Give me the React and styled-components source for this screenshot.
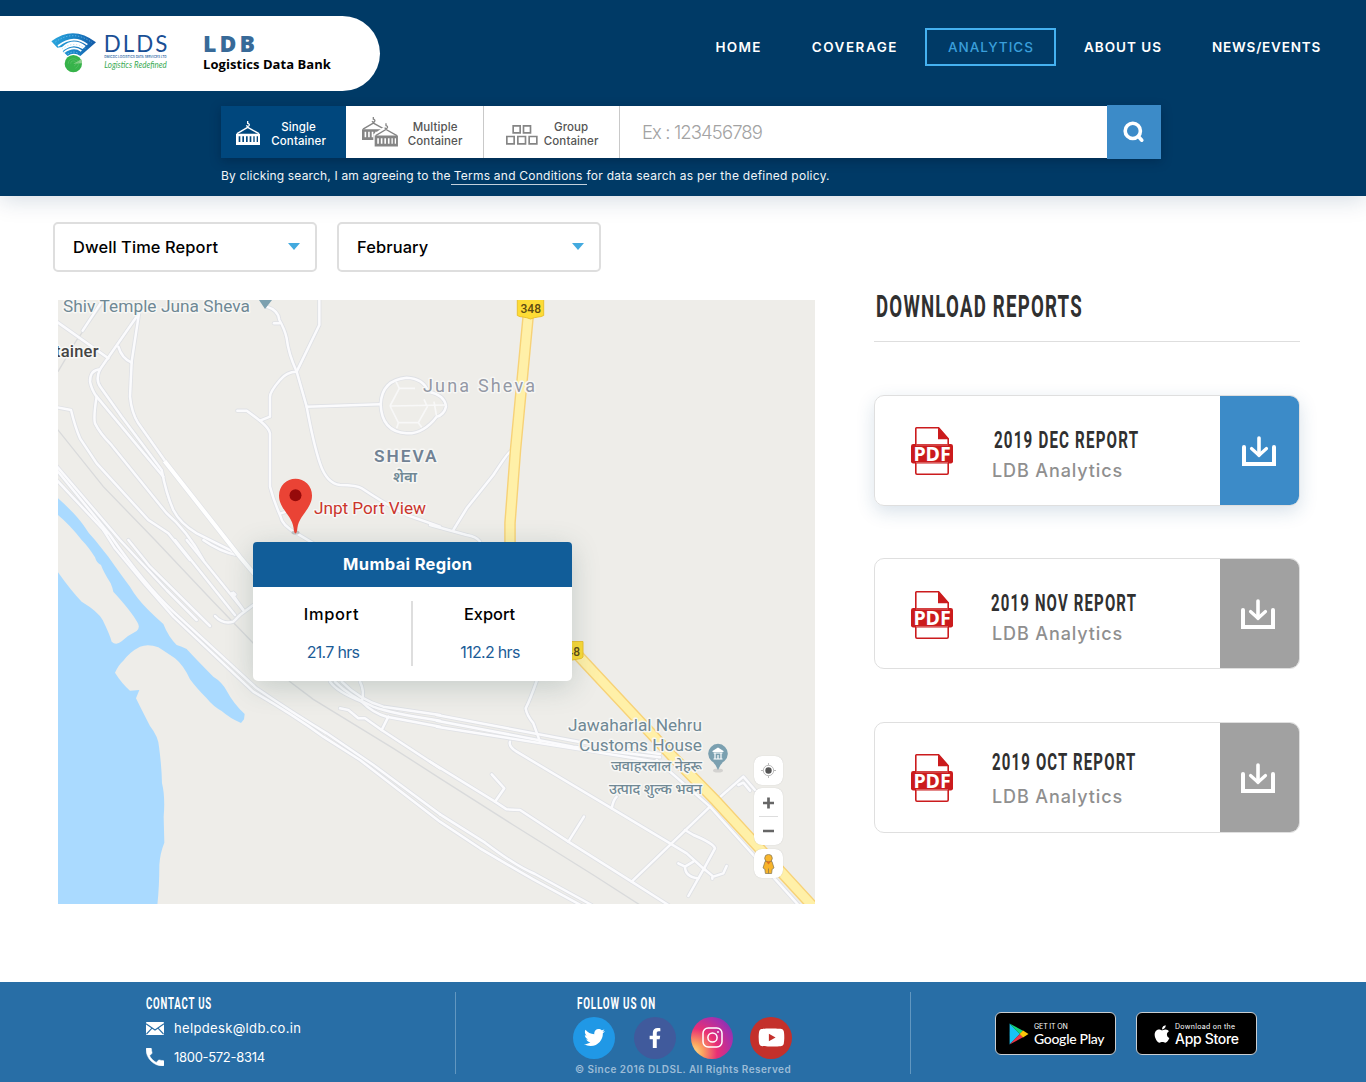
import React from 'react';
import styled, { createGlobalStyle, css } from 'styled-components';
import { FaTwitter, FaFacebookF, FaYoutube, FaApple } from 'react-icons/fa';

const GlobalStyle = createGlobalStyle`
  * { box-sizing: border-box; }
  html, body { margin: 0; padding: 0; background: #fff; }
  body { font-family: Inter, "Noto Sans", sans-serif; color: #0b0b0b; }
  svg { display: block; flex: none; }
`;

const condensed = css`
  font-family: Roboto, sans-serif;
  font-weight: 700;
  white-space: nowrap;
  transform-origin: left center;
`;

const Page = styled.div`
  width: 1366px;
  height: 1082px;
  display: flex;
  flex-direction: column;
  overflow: hidden;
`;

/* ---------- header ---------- */

const Header = styled.header`
  flex: none;
  height: 196px;
  background: #003a66;
  box-shadow: 0 4px 22px rgba(0, 50, 90, 0.17);
`;

const TopBar = styled.div`
  display: flex;
  justify-content: space-between;
  height: 106px;
  padding: 16px 23px 0 0;
`;

const LogoPill = styled.div`
  display: flex;
  width: 380px;
  height: 75px;
  padding: 12px 0 0 50px;
  background: #fff;
  border-radius: 0 38px 38px 0;
`;

const Brand = styled.div`
  margin-left: 31px;
  padding-top: 4px;
  font-family: "Open Sans", sans-serif;
  font-weight: 700;
  white-space: nowrap;
`;

const BrandShort = styled.div`
  font-size: 23px;
  line-height: 23px;
  font-weight: 800;
  letter-spacing: 3.1px;
  color: #386a98;
`;

const BrandLong = styled.div`
  margin-top: -1px;
  font-size: 13px;
  line-height: 20px;
  letter-spacing: 0.06px;
  color: #000;
`;

const Nav = styled.nav`
  display: flex;
  gap: 5px;
  height: 38px;
  margin-top: 12px;
`;

const NavItem = styled.a`
  display: flex;
  align-items: center;
  padding: 0 20px 0 21px;
  border: 2px solid ${(p) => (p.$active ? '#45b1f0' : 'transparent')};
  color: ${(p) => (p.$active ? '#3a9fdb' : '#fff')};
  font-size: 13.5px;
  font-weight: ${(p) => (p.$active ? 500 : 600)};
  letter-spacing: ${(p) => p.$track}px;
  white-space: nowrap;
`;

const SearchBar = styled.div`
  display: flex;
  width: 940px;
  height: 52px;
  margin-left: 221px;
  background: #fff;
  box-shadow: 0 3px 10px rgba(0, 20, 45, 0.35);
`;

const Tab = styled.button`
  display: flex;
  align-items: center;
  justify-content: flex-end;
  gap: ${(p) => p.$gap}px;
  width: ${(p) => p.$width}px;
  padding: 0 ${(p) => (p.$active ? 20 : 20.5)}px 0 0;
  border: 0;
  border-right: ${(p) => (p.$active ? '0' : '1px solid #c9c9c9')};
  background: ${(p) => (p.$active ? '#00477d' : '#fff')};
  color: ${(p) => (p.$active ? '#fff' : '#555')};
  font: 500 11.5px/14px Inter, sans-serif;
  letter-spacing: 0.1px;
  text-align: center;

  svg {
    margin-top: ${(p) => p.$drop}px;
    color: ${(p) => (p.$active ? '#fff' : '#858585')};
  }
  span { padding-top: 4px; }
`;

const SearchField = styled.div`
  flex: 1;
  display: flex;
  align-items: center;
  padding-left: 22px;
  color: #a3a3a3;
  font-size: 18.5px;
  font-weight: 300;
  letter-spacing: -0.9px;
`;

const SearchButton = styled.button`
  display: grid;
  place-items: center;
  width: 54px;
  height: 54px;
  margin-top: -1px;
  padding: 0;
  border: 0;
  background: #3c8bc8;
`;

const Terms = styled.p`
  display: flex;
  margin: 9px 0 0 221px;
  font-size: 12px;
  line-height: 17px;
  letter-spacing: 0.17px;
  color: #f1f5f8;
  white-space: pre;
`;

const TermsLink = styled.a`
  height: 18px;
  padding: 0 4px 0 3px;
  border-bottom: 1px solid #c3d0dc;
  letter-spacing: 0.24px;
`;

const TermsTail = styled.span`
  letter-spacing: 0.26px;
`;

/* ---------- main ---------- */

const Filters = styled.div`
  display: flex;
  gap: 20px;
  padding: 26px 0 0 53px;
`;

const Select = styled.div`
  display: flex;
  align-items: center;
  justify-content: space-between;
  width: 264px;
  height: 50px;
  padding: 0 15px 0 18px;
  border: 2px solid #dedede;
  border-radius: 5px;
  background: #fff;
  font-size: 16.4px;
  font-weight: 500;
  letter-spacing: 0.12px;
  color: #000;
`;

const Main = styled.main`
  flex: 1;
  display: flex;
  gap: 59px;
  padding: 28px 0 0 58px;
`;

const MapBox = styled.section`
  position: relative;
  width: 757px;
  height: 604px;
`;

const Popup = styled.div`
  position: absolute;
  left: 194.5px;
  top: 241.5px;
  width: 319.5px;
  height: 139.5px;
  border-radius: 5px;
  background: #fff;
  box-shadow: 0 6px 28px rgba(50, 85, 85, 0.22);
`;

const PopupTitle = styled.div`
  height: 45.5px;
  border-radius: 4px 4px 0 0;
  background: #115d99;
  color: #fff;
  font-size: 16.5px;
  font-weight: 700;
  line-height: 45px;
  letter-spacing: 0.33px;
  padding-right: 9px;
  text-align: center;
`;

const PopupBody = styled.div`
  display: grid;
  grid-template-columns: 160px 159px;
  padding-top: 14px;
`;

const Stat = styled.div`
  height: 65px;
  padding: ${(p) => p.$pad};
  text-align: center;
  &:first-child { border-right: 2px solid #dedede; }
`;

const StatName = styled.div`
  padding-top: 2px;
  font-size: 16.4px;
  font-weight: 500;
  line-height: 22px;
  letter-spacing: ${(p) => p.$track}px;
  color: #000;
`;

const StatValue = styled.div`
  padding: 16px 0 0 ${(p) => p.$shift}px;
  font-size: 16px;
  line-height: 22px;
  letter-spacing: -0.7px;
  color: #1b5c97;
`;

const Controls = styled.div`
  position: absolute;
  left: 696px;
  top: 456px;
  display: flex;
  flex-direction: column;
`;

const Control = styled.div`
  display: flex;
  flex-direction: column;
  align-items: center;
  justify-content: center;
  width: 29px;
  height: ${(p) => p.$height}px;
  margin-bottom: ${(p) => p.$after || 0}px;
  border-radius: 8px;
  background: #fff;
  box-shadow: 0 0 1px rgba(0, 0, 0, 0.2);
`;

const Sidebar = styled.aside`
  width: 426px;
`;

const SidebarTitle = styled.h2`
  ${condensed}
  width: 340px;
  height: 42px;
  margin: -9px 0 0 1.5px;
  font-size: 31px;
  line-height: 31px;
  letter-spacing: 2px;
  color: #303030;
  transform: scaleX(0.602);
`;

const Rule = styled.div`
  height: 1px;
  margin: 8px 0 53px;
  background: #dedede;
`;

const Card = styled.article`
  display: flex;
  height: 111px;
  margin-bottom: ${(p) => p.$after}px;
  padding-left: 36px;
  border: 1px solid #dfdfdf;
  border-radius: 10px;
  overflow: hidden;
  box-shadow: ${(p) => (p.$active ? '0 6px 18px rgba(30, 85, 130, 0.17)' : 'none')};
`;

const PdfSlot = styled.div`
  flex: none;
  padding-top: ${(p) => p.$top}px;
`;

const CardText = styled.div`
  flex: 1;
  min-width: 0;
  display: flex;
  flex-direction: column;
  justify-content: flex-end;
  padding: 0 0 ${(p) => p.$bottom}px 39px;
`;

const CardTitle = styled.h3`
  ${condensed}
  width: 240px;
  margin: 0 0 ${(p) => p.$gap}px ${(p) => p.$shift}px;
  font-size: 24.5px;
  line-height: 24px;
  letter-spacing: 1.9px;
  color: #303030;
  transform: scaleX(${(p) => p.$squeeze});
`;

const CardSub = styled.div`
  font-size: 18px;
  font-weight: 500;
  line-height: 22px;
  letter-spacing: 0.88px;
  color: #8f8f8f;
`;

const DownloadButton = styled.button`
  flex: none;
  display: grid;
  place-items: center;
  width: 79px;
  padding: 0 ${(p) => (p.$active ? 1 : 3)}px 0 0;
  border: 0;
  background: ${(p) => (p.$active ? '#3c8bc8' : '#a1a1a1')};
`;

/* ---------- footer ---------- */

const Footer = styled.footer`
  flex: none;
  display: flex;
  height: 100px;
  padding-top: 10px;
  background: #286ea6;
  color: #fff;
`;

const FooterColumn = styled.div`
  width: ${(p) => p.$width}px;
  height: 82px;
  padding-left: ${(p) => p.$left}px;
  border-right: ${(p) => (p.$last ? '0' : '1px solid #6297c0')};
`;

const FooterTitle = styled.h4`
  ${condensed}
  width: 150px;
  margin: 3px 0 0 ${(p) => p.$shift || 0}px;
  font-size: 16.5px;
  line-height: 17px;
  letter-spacing: 1.4px;
  transform: scaleX(${(p) => p.$squeeze});
`;

const ContactLine = styled.div`
  display: flex;
  align-items: center;
  gap: 10px;
  height: 20px;
  margin-top: ${(p) => p.$top}px;
  font-size: 13px;
  letter-spacing: ${(p) => p.$track}px;
`;

const Socials = styled.div`
  display: flex;
  gap: 17px;
  margin-top: 4.5px;
`;

const Social = styled.a`
  display: grid;
  place-items: center;
  width: 42px;
  height: 42px;
  margin: 0 -${(p) => p.$nudge || 0}px 0 ${(p) => p.$nudge || 0}px;
  border-radius: 50%;
  background: ${(p) => p.$bg};
  color: #fff;
`;

const Copyright = styled.div`
  margin: 3px 0 0 2px;
  font-size: 10px;
  font-weight: 600;
  line-height: 14px;
  letter-spacing: 0.45px;
  color: #9cbcd7;
  white-space: nowrap;
`;

const Stores = styled.div`
  display: flex;
  gap: 20px;
  padding-top: 20px;
`;

const Store = styled.a`
  display: flex;
  align-items: center;
  gap: ${(p) => p.$gap}px;
  width: 121px;
  height: 43px;
  padding-left: ${(p) => p.$left}px;
  border: 1px solid #c9cdd1;
  border-radius: 6px;
  background: #000;
`;

const StoreSmall = styled.div`
  font: 400 7px/9px Inter, sans-serif;
  letter-spacing: ${(p) => p.$track}px;
  white-space: nowrap;
`;

const StoreName = styled.div`
  font-family: ${(p) => p.$font};
  font-size: 14px;
  font-weight: 500;
  line-height: 15px;
  letter-spacing: -0.3px;
  white-space: nowrap;
`;

/* ---------- drawings ---------- */

const DldsLogo = () => (
  <svg width="122" height="51" viewBox="150 84 366 153">
    <defs>
      <linearGradient id="wave" x1="0" x2="1">
        <stop offset="0" stopColor="#2ba6dd" />
        <stop offset="0.5" stopColor="#1b86c9" />
        <stop offset="1" stopColor="#1459a6" />
      </linearGradient>
    </defs>
    <path fill="url(#wave)" d="M154 124Q220 74 288 127L241 168Q221 154 203 168L188 154L193 149Q220 129 248 147L257 138Q220 110 186 141L172 143Z" />
    <path fill="none" stroke="#fff" strokeWidth="5" d="M174 138Q220 102 262 134M192 157Q221 136 244 153" />
    <path fill="none" stroke="#8fcdf0" strokeWidth="2" strokeDasharray="4 5" d="M166 126Q220 87 276 128M186 147Q220 121 256 145M203 162Q221 150 238 162" />
    <circle cx="220" cy="191" r="26" fill="#37b34a" />
    <path d="M220 191L244 178A27 27 0 0 1 246 190Z" fill="#8ed08f" />
    <path fill="none" stroke="#5ac267" strokeWidth="2" d="M205 191A15 15 0 1 1 226 205M212 191A8 8 0 1 1 222 198" />
    <text x="311" y="156" fontFamily="Lato" fontSize="67" fill="#1a4f95" textLength="191">DLDS</text>
    <text x="313" y="174" fontFamily="Inter" fontWeight="500" fontSize="11.5" fill="#1f5f9f" textLength="187" lengthAdjust="spacingAndGlyphs">DMICDC LOGISTICS DATA SERVICES LTD</text>
    <text x="313" y="205" fontFamily="Lato" fontStyle="italic" fontSize="28" fill="#3aaa55" textLength="187" lengthAdjust="spacingAndGlyphs">Logistics Redefined</text>
  </svg>
);

const ContainerShape = () => (
  <>
    <path fillRule="evenodd" fill="currentColor" d="M0 38H72V72H0ZM8 46V63H13V46ZM19 46V63H24V46ZM30 46V63H35V46ZM41 46V63H46V46ZM52 46V63H56V46ZM62 46V63H66V46Z" />
    <path fill="none" stroke="currentColor" strokeWidth="4" d="M3 38L35 19L69 38M35 0V7Q42 9 39 14Q35 19 31 13" />
  </>
);

const SingleIcon = () => (
  <svg width="24" height="24" viewBox="0 0 72 72"><ContainerShape /></svg>
);

const MultipleIcon = () => (
  <svg width="37" height="30" viewBox="0 0 111 90">
    <g transform="scale(0.97 0.96)"><ContainerShape /></g>
    <path fill="#fff" d="M34 90V52L62 32H111V90Z" />
    <g transform="translate(38 19) scale(0.97)"><ContainerShape /></g>
  </svg>
);

const GroupIcon = () => (
  <svg width="32" height="20" viewBox="0 0 96 60">
    <path fill="none" stroke="currentColor" strokeWidth="5" d="M21.5 2.5H42.5V23.5H21.5ZM52.5 2.5H73.5V23.5H52.5ZM2.5 34.5H24.5V56.5H2.5ZM35.5 34.5H58.5V56.5H35.5ZM69.5 34.5H92.5V56.5H69.5Z" />
  </svg>
);

const SearchIcon = () => (
  <svg width="22" height="22" viewBox="0 0 22 22" fill="none" stroke="#fff" strokeWidth="3.6" strokeLinecap="round">
    <circle cx="9.8" cy="9.9" r="7.6" />
    <path d="M15.4 15.6L18.8 19.2" />
  </svg>
);

const Caret = () => (
  <svg width="12" height="8" viewBox="0 0 12 8"><path d="M0 0H12L6 7Z" fill="#43aadf" /></svg>
);

const PdfIcon = () => (
  <svg width="42" height="48" viewBox="0 0 42 48">
    <path d="M5.5 .8H27.6L37.2 11.7V46Q37.2 47.2 36 47.2H6Q4.8 47.2 4.8 46V1.5Q4.8 .8 5.5 .8Z" fill="#fff" stroke="#cb1b1d" strokeWidth="1.6" />
    <path d="M27 .5L38 12.3H27Z" fill="#cb1b1d" />
    <rect y="17" width="42" height="19.5" rx="2.2" fill="#cb1b1d" />
    <path d="M5 18H37M5 35.7H37" stroke="#e58a8a" strokeWidth=".7" />
    <text x="2.4" y="34" fill="#fff" fontFamily="Noto Sans" fontWeight="700" fontSize="19.8" textLength="37.4" lengthAdjust="spacingAndGlyphs">PDF</text>
  </svg>
);

const DownloadIcon = () => (
  <svg width="34" height="30" viewBox="0 0 34 30" fill="none" stroke="#fff" strokeLinecap="round">
    <path strokeWidth="4" d="M2 11V28H32V11" />
    <path strokeWidth="3.6" d="M17 2V19" />
    <path strokeWidth="3.2" d="M9.5 12.5L17 19.3L24.5 12.5" />
  </svg>
);

const MailIcon = () => (
  <svg width="18" height="13" viewBox="0 0 18 13">
    <rect width="18" height="13" rx=".8" fill="#fff" />
    <path d="M0 1.8L9 8L18 1.8M.5 12L6 6.2M17.5 12L12 6.2" fill="none" stroke="#286ea6" strokeWidth="1.1" />
  </svg>
);

const PhoneIcon = () => (
  <svg width="18" height="18" viewBox="3 3 18 18">
    <path fill="#fff" stroke="#fff" strokeWidth=".5" d="M6.62 10.79c1.44 2.83 3.76 5.14 6.59 6.59l2.2-2.2c.27-.27.67-.36 1.02-.24 1.12.37 2.33.57 3.57.57.55 0 1 .45 1 1V20c0 .55-.45 1-1 1-9.39 0-17-7.61-17-17 0-.55.45-1 1-1h3.5c.55 0 1 .45 1 1 0 1.25.2 2.45.57 3.57.11.35.03.74-.25 1.02l-2.2 2.2z" />
  </svg>
);

const InstagramIcon = () => (
  <svg width="21" height="21" viewBox="0 0 21 21" fill="none" stroke="#fff" strokeWidth="1.5">
    <rect x="1" y="1" width="19" height="19" rx="5.2" />
    <circle cx="10.5" cy="10.5" r="4.6" />
    <circle cx="16" cy="5" r=".9" fill="#fff" stroke="none" />
  </svg>
);

const PlayIcon = () => (
  <svg width="20" height="22" viewBox="0 0 20 22">
    <path d="M.6 .6V21.4L11 11Z" fill="#18c4f4" />
    <path d="M.6 .4L14 7.8L10.8 11Z" fill="#12d778" />
    <path d="M.6 21.6L14 14.2L10.8 11Z" fill="#ee3448" />
    <path d="M14 7.6L19.5 11L14 14.4L10.6 11Z" fill="#fcc60b" />
  </svg>
);

const TargetIcon = () => (
  <svg width="15" height="15" viewBox="0 0 15 15">
    <circle cx="7.5" cy="7.5" r="5.2" fill="none" stroke="#aaa" strokeWidth=".8" />
    <path d="M7.5 0V2.3M7.5 12.7V15M0 7.5H2.3M12.7 7.5H15" stroke="#aaa" strokeWidth=".8" />
    <circle cx="7.5" cy="7.5" r="3.2" fill="#555" />
  </svg>
);

const ZoomIcon = () => (
  <svg width="19" height="40" viewBox="0 0 19 40">
    <path d="M4 6H15M9.5 .5V11.5M4 34H15" stroke="#666" strokeWidth="2.7" />
    <path d="M0 19.5H19" stroke="#ddd" />
  </svg>
);

const PegmanIcon = () => (
  <svg width="13" height="20" viewBox="0 0 13 20" stroke="#7f7351" strokeWidth=".7">
    <path fill="#f7b42b" d="M3 7.5H10L12 14L10.2 15L9.6 19.5H3.4L2.8 15L1 14Z" />
    <circle cx="6.5" cy="4.2" r="3.8" fill="#f8b62d" />
    <path d="M4 7.6H9L6.5 10.4Z" fill="#e1711b" stroke="none" />
    <path d="M6.5 14.5V19.5" />
  </svg>
);

const MAP_ROADS = [
  ['40 210', [
    'M50 335L205 445', 'M185 275L128 362', 'M297 310L203 445L180 478Q150 480 150 515Q155 540 170 560L370 800',
    'M297 310L275 455L270 560Q275 610 295 640L380 760', 'M235 410Q245 445 275 458',
    'M180 478Q165 510 182 532L245 620L365 780Q378 850 400 900Q420 940 470 970L590 1030',
    'M170 560Q160 620 165 640Q180 670 210 700L380 910Q440 960 490 1050',
    'M50 592L93 600Q105 650 120 685L170 760L325 930L385 970L450 1050',
    'M680 290Q715 300 718 330Q735 360 740 385Q745 430 770 485L800 590Q820 700 840 760Q860 820 900 825Q950 825 965 835Q1040 885 1100 915L1200 950',
    'M718 340H702', 'M838 270V345L770 485Q740 485 720 510Q690 545 690 560V620L660 632',
    'M592 602H620L660 632Q688 655 690 670V830Q700 870 722 920Q725 945 770 970L820 1000',
    'M722 910L740 905', 'M800 590L1020 583',
    'M1165 545Q1215 555 1218 590Q1212 615 1190 620Q1150 672 1100 670Q1025 665 1022 583Q1025 510 1100 503Q1150 505 1165 545',
  ]],
  ['40 540', [
    'M190 -30L225 25Q310 130 400 230L640 455Q760 525 850 590L960 660L1200 845L1320 925Q1430 990 1480 1018L1640 1105',
    'M50 -210L210 -15Q310 130 400 215L650 445Q760 520 860 580L1000 675L1200 823',
    'M50 -180L200 -20', 'M50 -222L240 0L380 150L470 240', 'M265 0L330 80L510 258',
    'M405 0L585 225', 'M440 0L610 210', 'M575 160L610 210M580 158L586 164', 'M525 228Q550 255 580 245L600 225L640 195', 'M490 0Q540 35 590 45',
    'M870 425Q890 455 965 485Q1000 520 1040 530L1200 560', 'M905 425Q960 480 1030 500L1200 525',
    'M885 425Q930 470 1000 500Q1050 520 1200 542', 'M960 425Q975 455 965 485',
    'M900 505L925 510L955 535L975 535L1025 570L1200 685', 'M1045 530L1025 570',
  ]],
  ['430 600', [
    'M20 345L445 425L690 462', 'M20 362L430 440L690 472', 'M20 380L680 485',
    'M320 243Q300 300 287 325Q290 345 310 370L330 425', 'M240 425Q235 440 260 455L545 625L770 760L825 810', 'M545 625Q550 600 560 590',
    'M0 485L195 605L230 628L270 630L415 725L605 845L715 915', 'M185 523L223 565L195 605', 'M462 650L415 725',
    'M30 643L165 728Q260 800 315 822L485 915', 'M605 845L840 620', 'M680 480L840 620L1105 915',
    'M860 600L940 530L975 570', 'M925 555L940 548L960 572', 'M765 690L790 705Q850 730 855 745L825 800L775 888',
    'M745 790L765 800Q765 830 805 835M765 800L790 785M820 805L850 830L880 820L890 798M847 828V836',
  ]],
  ['430 290', ['M243 483Q235 485 190 555L110 655L70 720', 'M0 705L110 735Q140 740 150 755']],
];

const MapRoads = ({ color, width }) => (
  <g fill="none" stroke={color} strokeWidth={width} strokeLinejoin="round" strokeLinecap="round">
    {MAP_ROADS.map(([origin, paths]) => (
      <g key={origin} transform={`translate(${origin}) scale(0.33333)`}>
        {paths.map((d) => <path key={d} d={d} />)}
      </g>
    ))}
  </g>
);

const MapLabels = styled.g`
  font-family: Roboto, "Noto Sans", sans-serif;
  font-size: 17.3px;
  font-weight: 450;
  fill: #6f8894;
  stroke: #f7f7f5;
  stroke-width: 3px;
  stroke-linejoin: round;
  paint-order: stroke;
`;

const HIGHWAYS = 'M530 300L528 318L515.5 450L510 523V545M574 651L673 757L716 801L818 912';

const MapDrawing = () => (
  <svg width="757" height="604" viewBox="58 300 757 604">
    <rect x="58" y="300" width="757" height="604" fill="#eeede9" />
    <g transform="translate(40 540) scale(0.33333)">
      <path fill="#aadaff" d="M54 -125Q105 -80 130 -45Q145 -20 165 0L205 50Q240 100 270 140Q290 175 325 210Q345 230 370 252Q385 290 410 315Q425 320 440 327Q470 360 520 410Q545 425 560 452Q580 490 614 522L612 538L603 549Q570 535 545 513Q520 500 500 475Q470 445 450 418Q430 375 405 355Q375 335 355 322Q325 310 300 320Q270 335 250 362Q235 375 225 398Q245 430 270 452L298 450L288 475Q305 510 330 558Q355 590 357 620Q365 680 366 730Q376 770 371 830Q372 870 373 908Q360 940 358 975Q358 1040 352 1095H54V97Q95 155 125 185Q175 215 188 240Q210 285 215 305Q228 318 245 304Q265 285 290 273Q302 262 292 247Q275 215 220 155Q218 145 212 130Q190 95 183 75Q170 70 165 52Q145 20 125 0Q90 -45 54 -75Z" />
      <g fill="none" stroke="#d9dadb" strokeWidth="4">
        <path d="M50 -335L190 -160L345 0L515 180L640 310L750 425L820 478L1060 625L1200 715L1420 855L1660 1005L1800 1095" />
        <path d="M54 -505L110 -600L190 -710" />
      </g>
    </g>
    <MapRoads color="#dfe1e5" width="12.5" />
    <MapRoads color="#fbfbfd" width="7.5" />
    <path d="M164.5 461L240 557L256 576" fill="none" stroke="#e1e3e6" strokeWidth="5.4" />
    <path d="M164.5 461L240 557L256 576" fill="none" stroke="#fff" strokeWidth="4" />
    <g transform="translate(40 210) scale(0.33333)" fill="none" stroke="#f8f8f8" strokeWidth="5">
      <path d="M1050 588L1078 535H1125M1068 515L1078 535M1050 588L1075 638H1135L1162 590L1152 568M1050 588L1220 585M1070 655L1075 638M1135 638L1145 652M1182 575L1190 620" />
    </g>
    <path d={HIGHWAYS} fill="none" stroke="#f7d277" strokeWidth="11.6" />
    <path d={HIGHWAYS} fill="none" stroke="#fff0a8" strokeWidth="8.8" />
    <path d="M517.3 299H543.7V315.5Q541 317 538 317Q534 317.5 530.5 319Q527 317.5 523 317Q520 317 517.3 315.5Z" fill="#fddc36" stroke="#e9bd28" strokeWidth=".9" />
    <path d="M560 641.5H583V657Q582 659 578 659Q572 659.5 568 662Z" fill="#fddc36" stroke="#e9bd28" strokeWidth=".9" />
    <g fontFamily="Roboto" fontWeight="500" fontSize="12" fill="#5c4a12">
      <text x="520.5" y="313">348</text>
      <text x="559.5" y="656">348</text>
    </g>
    <MapLabels>
      <text x="63" y="311.7" textLength="187">Shiv Temple Juna Sheva</text>
      <text x="55" y="356.7" fontSize="16.6" fontWeight="500" fill="#444" textLength="43.5">tainer</text>
      <text x="423" y="392" fontSize="18" fill="#9499a5" textLength="112">Juna Sheva</text>
      <text x="374" y="462.2" fontWeight="600" fill="#718294" textLength="62.5">SHEVA</text>
      <text x="405" y="482" textAnchor="middle" fontSize="15" fontWeight="600">शेवा</text>
      <text x="314" y="513.8" fill="#cb352c" textLength="112">Jnpt Port View</text>
      <text x="568" y="731.4" textLength="134">Jawaharlal Nehru</text>
      <text x="579" y="751.4" textLength="123">Customs House</text>
      <text x="702" y="771" textAnchor="end" fontSize="14.3" fontWeight="500">जवाहरलाल नेहरू</text>
      <text x="702" y="794" textAnchor="end" fontSize="14.3" fontWeight="500">उत्पाद शुल्क भवन</text>
    </MapLabels>
    <path d="M259 300H272L265 309Z" fill="#7ca0af" />
    <ellipse cx="295.5" cy="532.5" rx="4" ry="2" fill="#999" opacity=".5" />
    <path d="M295.5 533.5Q294 533 293.6 528C292 515 279 509 279 495.5A16.5 16.8 0 0 1 312 495.5C312 509 299 515 297.4 528Q297 533 295.5 533.5Z" fill="#ea4335" />
    <circle cx="295.5" cy="495.3" r="6" fill="#960a0a" />
    <ellipse cx="718" cy="770.5" rx="5" ry="2" fill="#aaa" opacity=".4" />
    <path d="M718 770Q716 764 711.5 761A9.8 9.8 0 1 1 724.5 761Q720 764 718 770Z" fill="#7ba0b0" />
    <path d="M712.5 751L718 747.5L723.5 751V752H712.5Z" fill="#fff" />
    <path d="M713.5 753H722.5M713.5 759H722.5M715 753V758.5M718 755V758.5M721 753V758.5" fill="none" stroke="#fff" strokeWidth="1.2" />
  </svg>
);

/* ---------- content ---------- */

const NAV = [
  { label: 'HOME', track: 1.3 },
  { label: 'COVERAGE', track: 1.5 },
  { label: 'ANALYTICS', track: 1, active: true },
  { label: 'ABOUT US', track: 1 },
  { label: 'NEWS/EVENTS', track: 0.8 },
];

const REPORTS = [
  { title: '2019 DEC REPORT', active: true, gap: 8, shift: 2, squeeze: 0.618, pdfTop: 31, bottom: 23, after: 52 },
  { title: '2019 NOV REPORT', gap: 8, shift: -1, squeeze: 0.611, pdfTop: 32, bottom: 23, after: 53 },
  { title: '2019 OCT REPORT', gap: 12, shift: 0, squeeze: 0.611, pdfTop: 31, bottom: 24, after: 0 },
];

export default function App() {
  return (
    <Page>
      <GlobalStyle />
      <Header>
        <TopBar>
          <LogoPill>
            <DldsLogo />
            <Brand>
              <BrandShort>LDB</BrandShort>
              <BrandLong>Logistics Data Bank</BrandLong>
            </Brand>
          </LogoPill>
          <Nav>
            {NAV.map((n) => (
              <NavItem key={n.label} $active={n.active} $track={n.track}>{n.label}</NavItem>
            ))}
          </Nav>
        </TopBar>
        <SearchBar>
          <Tab $active $width={125} $gap={11} $drop={2}><SingleIcon /><span>Single<br />Container</span></Tab>
          <Tab $width={138} $gap={8.5} $drop={0}><MultipleIcon /><span>Multiple<br />Container</span></Tab>
          <Tab $width={136} $gap={5.5} $drop={6}><GroupIcon /><span>Group<br />Container</span></Tab>
          <SearchField>Ex : 123456789</SearchField>
          <SearchButton><SearchIcon /></SearchButton>
        </SearchBar>
        <Terms>
          <span>By clicking search, I am agreeing to the</span>
          <TermsLink>Terms and Conditions</TermsLink>
          <TermsTail>for data search as per the defined policy.</TermsTail>
        </Terms>
      </Header>

      <Filters>
        <Select>Dwell Time Report<Caret /></Select>
        <Select>February<Caret /></Select>
      </Filters>

      <Main>
        <MapBox>
          <MapDrawing />
          <Popup>
            <PopupTitle>Mumbai Region</PopupTitle>
            <PopupBody>
              <Stat $pad="0">
                <StatName $track={0.7}>Import</StatName>
                <StatValue $shift={3}>21.7 hrs</StatValue>
              </Stat>
              <Stat $pad="0 5px 0 0">
                <StatName $track={0}>Export</StatName>
                <StatValue $shift={1}>112.2 hrs</StatValue>
              </Stat>
            </PopupBody>
          </Popup>
          <Controls>
            <Control $height={29} $after={3}><TargetIcon /></Control>
            <Control $height={57} $after={4}><ZoomIcon /></Control>
            <Control $height={29}><PegmanIcon /></Control>
          </Controls>
        </MapBox>

        <Sidebar>
          <SidebarTitle>DOWNLOAD REPORTS</SidebarTitle>
          <Rule />
          {REPORTS.map((r) => (
            <Card key={r.title} $active={r.active} $after={r.after}>
              <PdfSlot $top={r.pdfTop}><PdfIcon /></PdfSlot>
              <CardText $bottom={r.bottom}>
                <CardTitle $gap={r.gap} $shift={r.shift} $squeeze={r.squeeze}>{r.title}</CardTitle>
                <CardSub>LDB Analytics</CardSub>
              </CardText>
              <DownloadButton $active={r.active}><DownloadIcon /></DownloadButton>
            </Card>
          ))}
        </Sidebar>
      </Main>

      <Footer>
        <FooterColumn $width={456} $left={146}>
          <FooterTitle $squeeze={0.583}>CONTACT US</FooterTitle>
          <ContactLine $top={6} $track={0.35}><MailIcon />helpdesk@ldb.co.in</ContactLine>
          <ContactLine $top={9} $track={-0.3}><PhoneIcon />1800-572-8314</ContactLine>
        </FooterColumn>
        <FooterColumn $width={455} $left={117}>
          <FooterTitle $shift={4} $squeeze={0.595}>FOLLOW US ON</FooterTitle>
          <Socials>
            <Social $bg="#2098e6"><FaTwitter size={21} /></Social>
            <Social $bg="#405a9c" $nudge={1.5}><FaFacebookF size={20} /></Social>
            <Social $bg="radial-gradient(circle at 5% 85%, #fee18c 0%, #fba35f 18%, #e92f74 45%, #a92fab 75%, #5a3bb8 100%)"><InstagramIcon /></Social>
            <Social $bg="#c4302b"><FaYoutube size={27} /></Social>
          </Socials>
          <Copyright>© Since 2016 DLDSL. All Rights Reserved</Copyright>
        </FooterColumn>
        <FooterColumn $width={455} $left={84} $last>
          <Stores>
            <Store $left={13} $gap={5}>
              <PlayIcon />
              <div>
                <StoreSmall $track={-0.15}>GET IT ON</StoreSmall>
                <StoreName $font="Lato, sans-serif">Google Play</StoreName>
              </div>
            </Store>
            <Store $left={15} $gap={3}>
              <FaApple size={20} />
              <div>
                <StoreSmall $track={0.3}>Download on the</StoreSmall>
                <StoreName $font="Inter, sans-serif">App Store</StoreName>
              </div>
            </Store>
          </Stores>
        </FooterColumn>
      </Footer>
    </Page>
  );
}
